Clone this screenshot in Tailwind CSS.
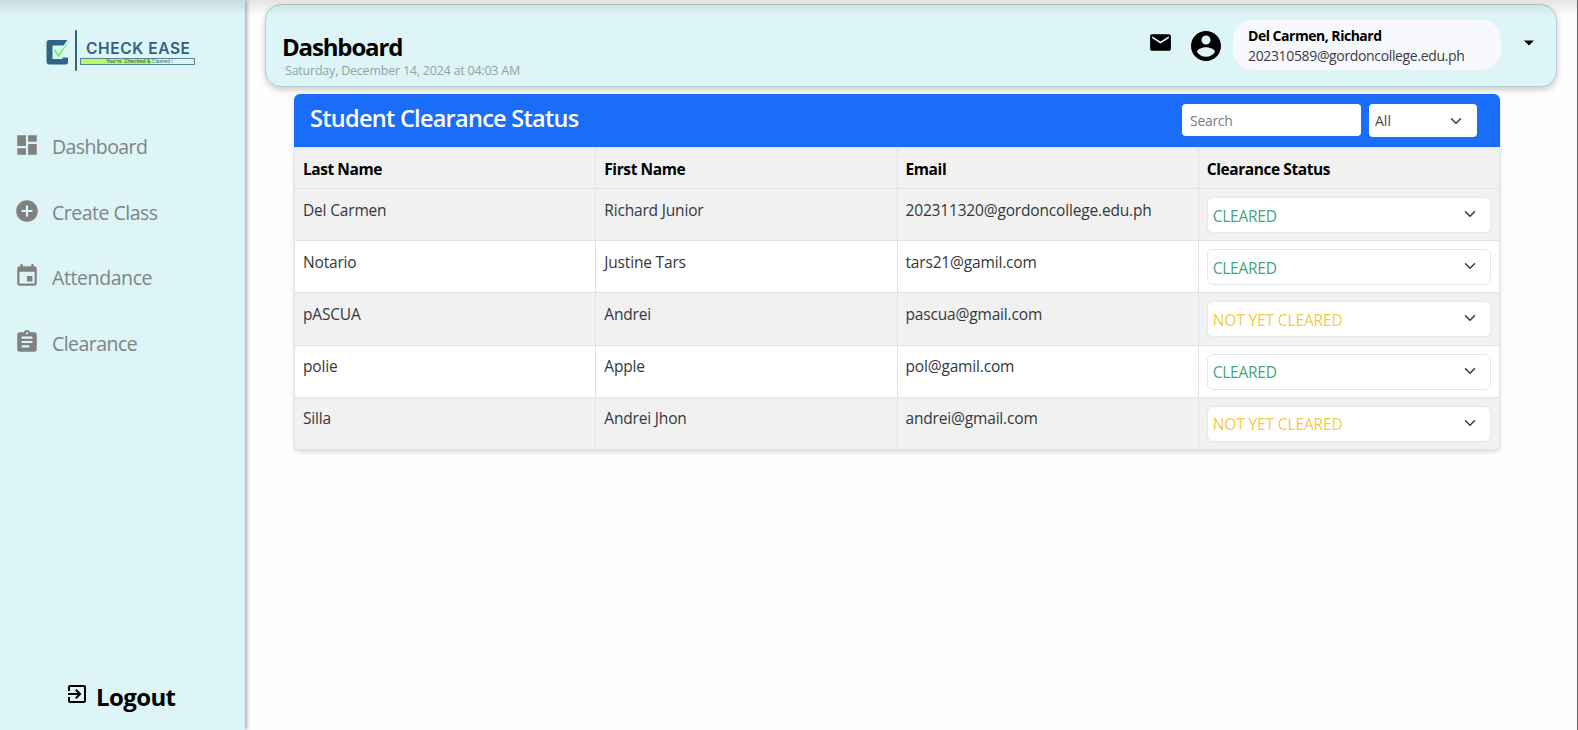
<!DOCTYPE html>
<html lang="en">
<head>
<meta charset="utf-8">
<title>Check Ease</title>
<script src="https://cdn.jsdelivr.net/npm/@tailwindcss/browser@4"></script>
</head>
<body class="relative flex h-[730px] w-[1578px] overflow-hidden bg-[#fefefe] font-['Open_Sans','Noto_Sans',sans-serif] text-[#212529]">
<aside class="relative z-10 flex w-[245px] shrink-0 flex-col bg-[#ddf5f6] shadow-[1px_0_5px_rgba(0,0,0,0.45)]">
  <div class="flex h-[112px] pt-[30px] pl-[46px]">
    <svg class="mt-[9px] h-[27px] w-[25px]" viewBox="0 0 25 27"><path d="M21.500 1H3.500Q0.500 1 0.500 4V22.500Q0.500 25.500 3.500 25.500H19.500Q22 25.500 22 23V18.500H16.500V20H6.500V6.500H18.500z" fill="#2f6580"/><path d="M12.500 17L22.500 2.500" fill="none" stroke="#ddf5f6" stroke-width="3.600"/><path d="M7.500 11.200l2-1.200 2.800 5L24 .500 12.700 19z" fill="#7df266"/></svg>
    <div class="ml-[4px] h-[41px] w-[2px] rounded bg-[#2f6580]"></div>
    <div class="ml-[3px] pt-[10px]">
      <div class="ml-[6px] h-[18px] w-max font-[Inter] text-[15.500px] leading-[17px] font-semibold tracking-[0.600px] whitespace-nowrap text-[#31617f]">CHECK EASE</div>
      <div class="flex h-[7px] w-[115px] justify-center border border-[#558794] bg-[linear-gradient(90deg,#b9fb66_0_62%,#ddf5f6_62%)] font-[Inter] text-[5px] leading-[5px] font-semibold whitespace-pre text-[#456d63]"><span class="pl-1">You're  Checked &amp; <span class="font-normal">Cleared !</span></span></div>
    </div>
  </div>
  <nav class="flex flex-col text-[20px] text-[#7f8485]">
    <a class="flex h-[65.700px] items-center gap-[12px] pl-[14px]"><svg class="h-[26px] w-[26px]" viewBox="0 0 24 24" fill="#818181"><path d="M3 13h8V3H3v10zm0 8h8v-6H3v6zm10 0h8V11h-8v10zm0-18v6h8V3h-8z"/></svg><span class="pt-[3px] text-[19.500px] tracking-[-0.600px]">Dashboard</span></a>
    <a class="flex h-[65.700px] items-center gap-[12px] pl-[14px]"><svg class="h-[26px] w-[26px]" viewBox="0 0 24 24" fill="#818181"><path d="M12 2C6.480 2 2 6.480 2 12s4.480 10 10 10 10-4.480 10-10S17.520 2 12 2zm5 11h-4v4h-2v-4H7v-2h4V7h2v4h4v2z"/></svg><span class="pt-[4px] text-[19.500px] tracking-[-0.500px]">Create Class</span></a>
    <a class="flex h-[65.700px] items-center gap-[12px] pl-[14px]"><svg class="h-[26px] w-[26px]" viewBox="0 0 24 24" fill="#818181"><path d="M17 12h-5v5h5v-5zM16 1v2H8V1H6v2H5c-1.110 0-1.990.9-1.990 2L3 19c0 1.100.890 2 2 2h14c1.100 0 2-.9 2-2V5c0-1.100-.9-2-2-2h-1V1h-2zm3 18H5V8h14v11z"/></svg><span class="pt-[3px] text-[19.500px] tracking-[-0.400px]">Attendance</span></a>
    <a class="flex h-[65.700px] items-center gap-[12px] pl-[14px]"><svg class="h-[26px] w-[26px]" viewBox="0 0 24 24" fill="#818181"><path d="M19 3h-4.180C14.400 1.840 13.300 1 12 1c-1.300 0-2.400.840-2.820 2H5c-1.100 0-2 .9-2 2v14c0 1.100.9 2 2 2h14c1.100 0 2-.9 2-2V5c0-1.100-.9-2-2-2zm-7 0c.550 0 1 .450 1 1s-.450 1-1 1-1-.450-1-1 .450-1 1-1zm2 14H7v-2h7v2zm3-4H7v-2h10v2zm0-4H7V7h10v2z"/></svg><span class="pt-[3px] text-[19.500px] tracking-[-0.550px]">Clearance</span></a>
  </nav>
  <a class="mt-auto flex items-center gap-[7px] pb-[16px] pl-[65px] text-black"><svg class="mb-[7px] h-[24px] w-[24px]" viewBox="0 0 24 24" fill="currentColor"><path d="M10.090 15.590L11.500 17l5-5-5-5-1.410 1.410L12.670 11H3v2h9.670l-2.580 2.590zM19 3H5c-1.110 0-2 .9-2 2v4h2V5h14v14H5v-4H3v4c0 1.100.890 2 2 2h14c1.100 0 2-.9 2-2V5c0-1.100-.9-2-2-2z"/></svg><span class="text-[24px] leading-[34px] font-bold tracking-[-0.600px]">Logout</span></a>
</aside>
<main class="flex flex-1 flex-col">
  <header class="mt-[4px] ml-[20px] flex h-[83px] w-[1292px] shrink-0 rounded-[16px] border border-[#b9cfd1] bg-[#ddf5f6] shadow-[0_3px_6px_rgba(0,0,0,0.2)]">
    <div class="flex-1 pt-[26px] pl-[16px]">
      <h1 class="w-max text-[24px] leading-[31px] font-bold tracking-[-1.150px] text-black">Dashboard</h1>
      <p class="ml-[3px] w-max text-[12.500px] leading-[18px] tracking-[-0.220px] text-[#8fa3a5]">Saturday, December 14, 2024 at 04:03 AM</p>
    </div>
    <svg class="mt-[25px] h-[25px] w-[25px]" viewBox="0 0 24 24"><path d="M20 4H4c-1.100 0-1.990.9-1.990 2L2 18c0 1.100.9 2 2 2h16c1.100 0 2-.9 2-2V6c0-1.100-.9-2-2-2zm0 4l-8 5-8-5V6l8 5 8-5v2z"/></svg>
    <svg class="mt-[23px] ml-[15px] h-[36px] w-[36px]" viewBox="0 0 24 24"><path d="M12 2C6.480 2 2 6.480 2 12s4.480 10 10 10 10-4.480 10-10S17.520 2 12 2zm0 3c1.660 0 3 1.340 3 3s-1.340 3-3 3-3-1.340-3-3 1.340-3 3-3zm0 14.200c-2.500 0-4.710-1.280-6-3.220.030-1.990 4-3.080 6-3.080 1.990 0 5.970 1.090 6 3.080-1.290 1.940-3.500 3.220-6 3.220z"/></svg>
    <div class="mt-[15px] ml-[9px] h-[50px] w-[268px] rounded-[20px] bg-[#f8f9fc] pt-[5px] pl-[15px] leading-[21px]">
      <div class="w-max text-[14px] leading-[21px] font-bold tracking-[-0.480px] text-black">Del Carmen, Richard</div>
      <div class="w-max text-[14px] leading-[20px] tracking-[-0.350px] text-[#383c40]">202310589@gordoncollege.edu.ph</div>
    </div>
    <svg class="mt-[35px] mr-[22px] ml-[23px] h-[6px] w-[10px]" viewBox="0 0 10 6"><path d="M0 .500h10L5 5.500z"/></svg>
  </header>
  <section class="mt-[7px] ml-[49px] w-[1206px] rounded-[6px] shadow-[0_2px_4px_rgba(0,0,0,0.15)]">
    <div class="flex h-[53px] rounded-t-[6px] bg-[#196df8] pl-[16px] text-white">
      <h2 class="w-max flex-1 pt-[8px] text-[23.500px] leading-[32px] font-semibold tracking-[-0.720px]">Student Clearance Status</h2>
      <div class="mt-[10px] h-[32px] w-[179px] rounded-[4px] bg-white pl-[8px] text-[14px] leading-[33px] text-[#747b83]"><span class="tracking-[-0.300px]">Search</span></div>
      <div class="mt-[10px] mr-[23px] ml-[8px] flex h-[33px] w-[108px] items-center justify-between rounded-[4px] bg-white pr-[15px] pl-[6px] text-[14px] text-[#43474b]"><span>All</span><svg class="h-[12px] w-[12px]" viewBox="0 0 16 16" fill="none" stroke="#343a40" stroke-width="2" stroke-linecap="round" stroke-linejoin="round"><path d="m2 5 6 6 6-6"/></svg></div>
    </div>
    <table class="w-full table-fixed border-collapse text-left text-[15.500px] leading-[24px]">
      <thead><tr class="h-[41px] bg-[#f1f1f1] align-top text-black">
        <th class="border border-[#e2e3e4] px-[8px] pt-[9px] font-bold"><span class="tracking-[-0.450px]">Last Name</span></th><th class="border border-[#e2e3e4] px-[8px] pt-[9px] font-bold"><span class="tracking-[-0.400px]">First Name</span></th><th class="border border-[#e2e3e4] px-[8px] pt-[9px] font-bold"><span class="tracking-[-0.400px]">Email</span></th><th class="border border-[#e2e3e4] px-[8px] pt-[9px] font-bold"><span class="tracking-[-0.430px]">Clearance Status</span></th>
      </tr></thead>
      <tbody id="rows"></tbody>
    </table>
  </section>
</main>
<div class="pointer-events-none absolute inset-x-0 top-0 z-20 h-[16px] bg-gradient-to-b from-black/10 to-transparent"></div>
<div class="absolute inset-y-0 right-0 z-20 w-[1px] bg-[#666]"></div>
<script>
const people = [
  ["Del Carmen", "Richard Junior", "202311320@gordoncollege.edu.ph", true],
  ["Notario", "Justine Tars", "tars21@gamil.com", true],
  ["pASCUA", "Andrei", "pascua@gmail.com", false],
  ["polie", "Apple", "pol@gamil.com", true],
  ["Silla", "Andrei Jhon", "andrei@gmail.com", false]
];
document.getElementById("rows").innerHTML = people.map(p => `
<tr class="h-[52.200px] align-top odd:bg-[#f1f1f1] even:bg-white">
  ${p.slice(0, 3).map(t => `<td class="border border-[#e2e3e4] px-[8px] pt-[8.500px]"><span class="tracking-[-0.170px] text-[#34383c]">${t}</span></td>`).join("")}
  <td class="border border-[#e2e3e4] px-[8px] pt-[8px]"><div class="flex h-[36px] items-center justify-between rounded-[6px] border border-[#e4e6e8] bg-white pr-[14px] pl-[5px]"><span class="pt-[1px] ${p[3] ? "tracking-[-0.250px] text-[#46a37c]" : "tracking-[-0.130px] text-[#f3cb45]"}">${p[3] ? "CLEARED" : "NOT YET CLEARED"}</span><svg class="mb-[2px] h-[12px] w-[12px]" viewBox="0 0 16 16" fill="none" stroke="#343a40" stroke-width="2" stroke-linecap="round" stroke-linejoin="round"><path d="m2 5 6 6 6-6"/></svg></div></td>
</tr>`).join("");
</script>
</body>
</html>
